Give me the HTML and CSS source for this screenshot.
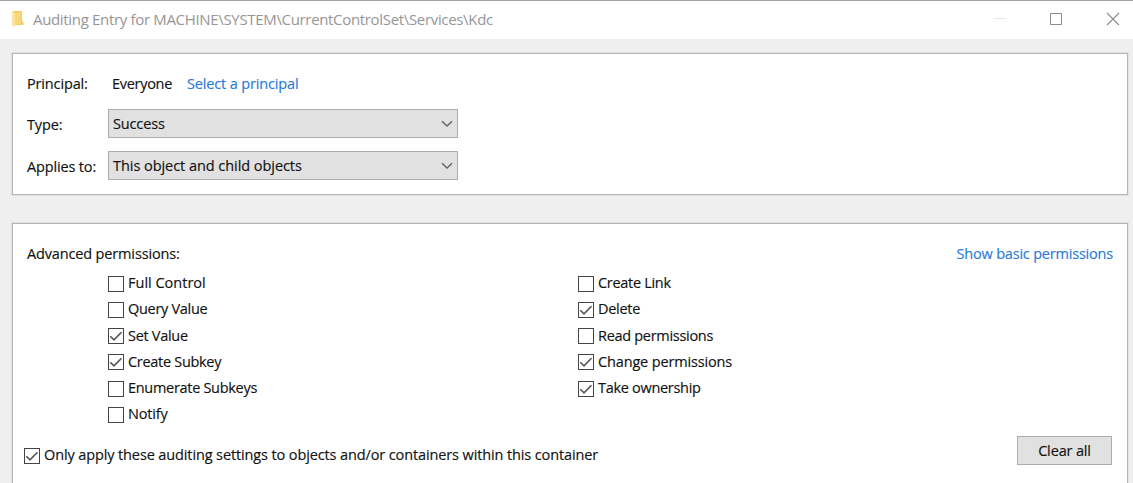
FILE: index.html
```html
<!DOCTYPE html>
<html lang="en">
<head>
<meta charset="utf-8">
<title>Auditing Entry</title>
<link rel="stylesheet" href="styles.css">
</head>
<body>
<svg class="defs" width="0" height="0"><defs>
<symbol id="tick" viewBox="0 0 16 16"><path d="M2.3 8.2 L6 11.8 L13.5 4.2" fill="none" stroke="#555" stroke-width="1.6"/></symbol>
<symbol id="chevron" viewBox="0 0 12 8"><path d="M1 1.3 L6 6 L11 1.3" fill="none" stroke="#666" stroke-width="1.5"/></symbol>
</defs></svg>
<header class="titlebar">
<svg class="folder" width="12" height="18" viewBox="0 0 12 18"><path d="M1 1h9v10l1.500 1v3H3z" fill="#f2cc68"/><path d="M0 1l3 2v14l-3-2z" fill="#fce5a0"/><path d="M3 3l6-1v12H3z" fill="#f7d777"/></svg>
<h1 class="title">Auditing Entry for MACHINE\SYSTEM\CurrentControlSet\Services\Kdc</h1>
<svg class="controls" width="126" height="14" viewBox="0 0 126 14"><path d="M0 6.500h12" stroke="#e8e8e8"/><path d="M56.500 1.500h11v11h-11z" fill="none" stroke="#8c8c8c"/><path d="M113 1l12 12M125 1l-12 12" stroke="#8c8c8c" stroke-width="1.1"/></svg>
</header>
<main class="content">
<section class="panel target">
<div class="row principal"><span class="label">Principal:</span><span class="value">Everyone</span><a class="link select-link">Select a principal</a></div>
<div class="row type"><span class="label">Type:</span><div class="combo"><span>Success</span><svg width="12" height="8"><use href="#chevron"/></svg></div></div>
<div class="row applies"><span class="label">Applies to:</span><div class="combo"><span class="object-text">This object and child objects</span><svg width="12" height="8"><use href="#chevron"/></svg></div></div>
</section>
<section class="panel permissions">
<div class="heading"><span class="heading-text">Advanced permissions:</span><a class="link basic-link">Show basic permissions</a></div>
<div class="columns">
<div class="column">
<div class="check"><i class="box"></i><span class="full">Full Control</span></div>
<div class="check"><i class="box"></i><span>Query Value</span></div>
<div class="check"><i class="box"><svg width="16" height="16"><use href="#tick"/></svg></i><span>Set Value</span></div>
<div class="check"><i class="box"><svg width="16" height="16"><use href="#tick"/></svg></i><span>Create Subkey</span></div>
<div class="check"><i class="box"></i><span>Enumerate Subkeys</span></div>
<div class="check"><i class="box"></i><span class="notify">Notify</span></div>
</div>
<div class="column">
<div class="check"><i class="box"></i><span>Create Link</span></div>
<div class="check"><i class="box"><svg width="16" height="16"><use href="#tick"/></svg></i><span>Delete</span></div>
<div class="check"><i class="box"></i><span>Read permissions</span></div>
<div class="check"><i class="box"><svg width="16" height="16"><use href="#tick"/></svg></i><span class="change">Change permissions</span></div>
<div class="check"><i class="box"><svg width="16" height="16"><use href="#tick"/></svg></i><span>Take ownership</span></div>
</div>
</div>
<div class="footer">
<div class="check only"><i class="box"><svg width="16" height="16"><use href="#tick"/></svg></i><span>Only apply these auditing settings to objects and/or containers within this container</span></div>
<button class="clear">Clear all</button>
</div>
</section>
</main>
</body>
</html>
```
FILE: styles.css
```css
* { box-sizing: border-box; }
body { margin: 0; height: 483px; overflow: hidden; background: #efefef; color: #111; font: 14.5px/20px "Open Sans", "Noto Sans", sans-serif; letter-spacing: -0.15px; white-space: nowrap; -webkit-text-stroke: 0.15px; }
.defs { display: none; }
svg { display: block; flex: none; }
.titlebar { height: 39px; background: #fff; border-top: 1px solid #a3a3a3; display: flex; align-items: flex-start; padding: 0 13px 0 12px; }
.folder { margin-top: 9px; }
.title { margin: 7px auto 0 9px; font-size: 15px; font-weight: 400; line-height: 22px; color: #969696; letter-spacing: -0.33px; -webkit-text-stroke: 0; }
.controls { margin: 11px 0 0; }
.content { padding: 14px 5px 0 12px; }
.panel { background: #fff; border: 1px solid #b5b5b5; outline: 1px solid #e2e2e2; }
.target { height: 142px; padding: 20px 0 0 14px; }
.row { display: flex; }
.label { width: 81px; padding-top: 6px; }
.principal { height: 35px; }
.principal .label { width: 85px; padding: 0; }
.value { width: 75px; letter-spacing: -0.3px; }
.link { color: #2a7bd8; }
.type { height: 42px; }
.combo { width: 350px; height: 29px; border: 1px solid #adadad; background: #e1e1e1; display: flex; justify-content: space-between; align-items: center; padding: 0 4px; }
.object-text { letter-spacing: -0.05px; }
.permissions { height: 270px; margin-top: 28px; padding: 20px 14px 0; }
.heading { display: flex; justify-content: space-between; height: 26px; }
.basic-link { letter-spacing: -0.2px; }
.columns { display: flex; padding-left: 81px; height: 168px; }
.column { width: 470px; }
.check { display: flex; align-items: center; height: 26.25px; letter-spacing: -0.3px; }
.full { letter-spacing: 0; }
.notify, .change { letter-spacing: -0.15px; }
.box { width: 16px; height: 16px; margin: 1px 4px 0 0; border: 1px solid #444; flex: none; }
.box svg { margin: -1px; }
.footer { display: flex; justify-content: space-between; margin-left: -3px; }
.only { margin-top: 4px; letter-spacing: -0.12px; }
.clear { width: 95px; height: 29px; margin: -2px 1px 0 0; padding: 0; border: 1px solid #adadad; background: #e1e1e1; font: inherit; letter-spacing: -0.15px; color: inherit; }
```
